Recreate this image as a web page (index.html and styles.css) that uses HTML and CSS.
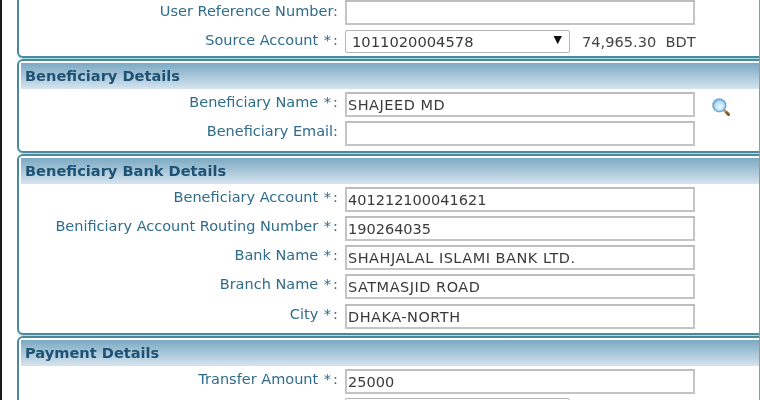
FILE: index.html
```html
<!DOCTYPE html>
<html lang="en">
<head>
    <meta charset="UTF-8">
    <meta name="viewport" content="width=device-width, initial-scale=1.0">
    <title>Fund Transfer</title>
    <link rel="stylesheet" href="styles.css">
</head>
<body>

<div class="page">
    <div class="panel panel-top">
        <div class="rows">
            <div class="row">
                <label>User Reference Number:</label>
                <input type="text" value="">
            </div>
            <div class="row row-select">
                <label>Source Account <span class="req">*</span>:</label>
                <span class="select-wrap">
                    <select><option>1011020004578</option></select>
                    <span class="select-arrow">▼</span>
                </span>
                <span class="balance">74,965.30&nbsp;&nbsp;BDT</span>
            </div>
        </div>
    </div>

    <div class="panel panel-beneficiary">
        <h2>Beneficiary Details</h2>
        <div class="rows">
            <div class="row">
                <label>Beneficiary Name <span class="req">*</span>:</label>
                <input class="caps" type="text" value="SHAJEED MD">
                <svg class="search-icon" width="20" height="20" viewBox="0 0 24 24">
                    <defs>
                        <radialGradient id="lens" cx="0.55" cy="0.6" r="0.6">
                            <stop offset="0" stop-color="#eef9fe"/>
                            <stop offset="0.6" stop-color="#b9e0f4"/>
                            <stop offset="1" stop-color="#7db4de"/>
                        </radialGradient>
                    </defs>
                    <line x1="15" y1="15" x2="21" y2="21" stroke="#b8955c" stroke-width="3.4" stroke-linecap="round"/>
                    <line x1="19" y1="19" x2="21" y2="21" stroke="#7a5d30" stroke-width="3.4" stroke-linecap="round"/>
                    <circle cx="10" cy="10" r="7.6" fill="url(#lens)" stroke="#6fa6d6" stroke-width="1.8"/>
                </svg>
            </div>
            <div class="row">
                <label>Beneficiary Email:</label>
                <input type="text" value="">
            </div>
        </div>
    </div>

    <div class="panel panel-bank">
        <h2>Beneficiary Bank Details</h2>
        <div class="rows">
            <div class="row">
                <label>Beneficiary Account <span class="req">*</span>:</label>
                <input type="text" value="401212100041621">
            </div>
            <div class="row">
                <label>Benificiary Account Routing Number <span class="req">*</span>:</label>
                <input type="text" value="190264035">
            </div>
            <div class="row">
                <label>Bank Name <span class="req">*</span>:</label>
                <input class="caps" type="text" value="SHAHJALAL ISLAMI BANK LTD.">
            </div>
            <div class="row">
                <label>Branch Name <span class="req">*</span>:</label>
                <input class="caps" type="text" value="SATMASJID ROAD">
            </div>
            <div class="row">
                <label>City <span class="req">*</span>:</label>
                <input class="caps" type="text" value="DHAKA-NORTH">
            </div>
        </div>
    </div>

    <div class="panel panel-payment">
        <h2>Payment Details</h2>
        <div class="rows">
            <div class="row">
                <label>Transfer Amount <span class="req">*</span>:</label>
                <input type="text" value="25000">
            </div>
            <div class="row row-select">
                <label></label>
                <span class="select-wrap">
                    <select></select>
                </span>
            </div>
        </div>
    </div>
</div>

</body>
</html>
```

FILE: styles.css
```css
html, body {
    margin: 0;
    height: 400px;
    overflow: hidden;
    background-color: #ffffff;
}

body {
    font-family: "DejaVu Sans", Verdana, sans-serif;
}

.page {
    height: 400px;
    overflow: hidden;
    border-left: 2px solid #1a1a1a;
    border-right: 1px solid #8f9a9e;
    padding-left: 15px;
    filter: blur(0.35px);
}

.panel {
    box-sizing: border-box;
    margin-right: -12px;
    margin-bottom: 1px;
    padding: 2px;
    border: 2px solid #4a8a9c;
    border-radius: 6px;
    box-shadow: 0 1px 0 #a8e0ea;
}

.panel-top {
    height: 58px;
    padding-top: 0;
    border-top: none;
    border-radius: 0 0 6px 6px;
}

.panel-beneficiary {
    height: 94px;
}

.panel-bank {
    height: 181px;
}

.panel-payment {
    height: 100px;
}

h2 {
    margin: 0 0 3px;
    height: 25.5px;
    padding-left: 4px;
    background: linear-gradient(#7ba9c3, #d6e4ef);
    color: #1d5274;
    font-size: 14.6px;
    font-weight: bold;
    line-height: 25px;
}

.rows {
    display: flex;
    flex-direction: column;
    gap: 4.25px;
}

.row {
    display: flex;
    align-items: center;
    height: 25px;
}

.row-select {
    height: 23px;
}

.panel-top .row-select {
    margin-top: 1px;
}

label {
    flex: none;
    width: 317px;
    margin-right: 7px;
    margin-top: -5px;
    color: #2f6c8c;
    font-size: 14.5px;
    text-align: right;
}

.panel-top label {
    margin-top: -3px;
}

.req {
    margin: 0 2px 0 1px;
}

input {
    box-sizing: border-box;
    width: 350px;
    height: 25px;
    margin: 0;
    padding: 1px 1px 0;
    border: 2px solid #c4c4c4;
    border-top-color: #bdbdbd;
    background-color: #ffffff;
    color: #3a3a3a;
    font-family: inherit;
    font-size: 14.5px;
}

.caps {
    letter-spacing: 0.5px;
}

.select-wrap {
    position: relative;
    display: block;
    width: 225px;
    height: 23px;
}

select {
    box-sizing: border-box;
    display: block;
    width: 100%;
    height: 100%;
    margin: 0;
    padding: 0 0 1px 6px;
    appearance: none;
    border: 1px solid #b4b4b4;
    border-radius: 2px;
    background-color: #ffffff;
    color: #3a3a3a;
    font-family: inherit;
    font-size: 14.7px;
}

.select-arrow {
    position: absolute;
    top: 3px;
    right: 8px;
    color: #111111;
    font-size: 11px;
}

.balance {
    margin-left: 12px;
    margin-top: -1px;
    color: #444444;
    font-size: 14.6px;
}

.search-icon {
    flex: none;
    margin: 6px 0 0 16px;
}
```
